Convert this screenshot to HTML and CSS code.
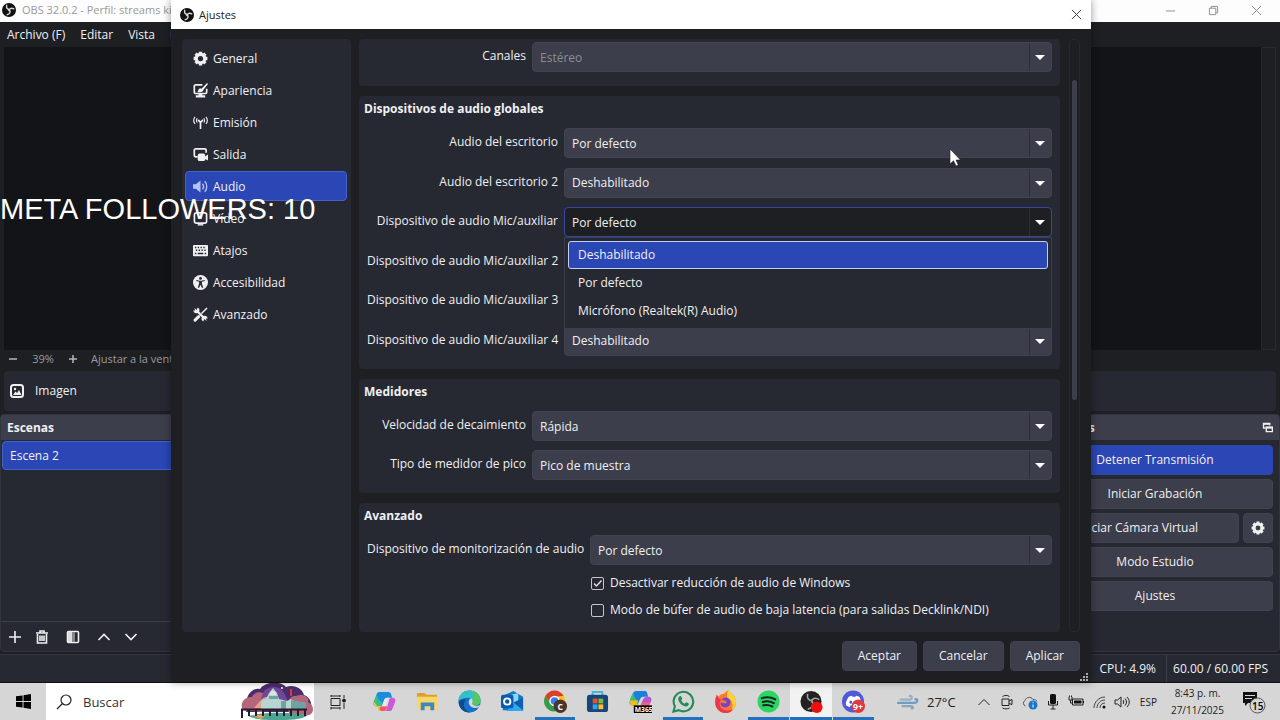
FILE: index.html
```
<!DOCTYPE html>
<html lang="es">

<head>
    <meta charset="UTF-8">
    <meta name="viewport" content="width=device-width, initial-scale=1">
    <title>OBS - Ajustes</title>
    <link rel="stylesheet" href="styles.css">
</head>

<body>
    <!-- shared icons -->
    <svg class="defs" width="0" height="0" aria-hidden="true">
        <symbol id="obs" viewBox="0 0 24 24">
            <circle cx="12" cy="12" r="12" fill="#111"></circle>
            <g fill="none" stroke="#ddd" stroke-width="2.4" stroke-linecap="round">
                <path d="M8 4c-1 4 1 7 5 7"></path>
                <path d="M20 10c-3-2-7-1-8 3"></path>
                <path d="M9 20c4-1 6-4 4-8"></path>
            </g>
            <circle cx="12" cy="12" r="1.6" fill="#ddd"></circle>
        </symbol>
        <symbol id="gear" viewBox="0 0 24 24">
            <g fill="none" stroke="currentColor">
                <circle cx="12" cy="12" r="6.7" stroke-width="5"></circle>
                <path stroke-width="5.4" d="M12 1v4.500M12 18.500V23M1 12h4.500M18.500 12H23M4.200 4.200l3.200 3.200M16.600 16.600l3.200 3.200M4.200 19.800l3.200-3.200M16.600 7.400l3.200-3.200"></path>
            </g>
        </symbol>
    </svg>

    <div class="desktop">
        <div class="obs">
            <div class="titlebar">
                <svg class="logo" viewBox="0 0 24 24"><use href="#obs"></use></svg>
                <span>OBS 32.0.2 - Perfil: streams kick</span>
                <div class="window-buttons">
                    <button aria-label="Minimizar"><svg viewBox="0 0 12 12"><path d="M1 6.5h10"></path></svg></button>
                    <button aria-label="Restaurar"><svg viewBox="0 0 12 12"><path d="M1.500 3.500h7v7h-7zM3.500 3.500v-2h7v7h-2"></path></svg></button>
                    <button aria-label="Cerrar"><svg viewBox="0 0 12 12"><path d="M1 1l10 10M11 1L1 11"></path></svg></button>
                </div>
            </div>
            <nav class="menubar">
                <button>Archivo (F)</button>
                <button>Editar</button>
                <button>Vista</button>
                <button>Perfil</button>
            </nav>
            <div class="preview">
                <div class="canvas"></div>
                <div class="gutter"></div>
            </div>
            <div class="zoombar">
                <button aria-label="Alejar"><svg viewBox="0 0 10 10"><path d="M1 5h8"></path></svg></button>
                <span class="percent">39%</span>
                <button aria-label="Acercar"><svg viewBox="0 0 10 10"><path d="M1 5h8M5 1v8"></path></svg></button>
                <span class="fit">Ajustar a la ventana</span>
            </div>
            <div class="context">
                <svg viewBox="0 0 16 16"><rect x="2" y="2" width="12" height="12" rx="2.5" fill="none" stroke="currentColor" stroke-width="2"></rect><path fill="currentColor" d="M4 12l2.500-3.500 1.500 1.500 2-3L12.500 12z"></path><circle cx="6" cy="6" r="1.2" fill="currentColor"></circle></svg>
                <span>Imagen</span>
            </div>
            <div class="docks">
                <section class="dock scenes">
                    <h2>Escenas</h2>
                    <div class="scene-list">
                        <button class="scene">Escena 2</button>
                    </div>
                    <div class="dock-tools">
                        <button aria-label="Añadir"><svg viewBox="0 0 14 14"><path d="M7 1v12M1 7h12"></path></svg></button>
                        <button aria-label="Eliminar"><svg viewBox="0 0 14 14"><path d="M1 3h12M5 2.500V1h4v1.500M2.500 4v9h9V4M5 5.500v5.500M7 5.500v5.500M9 5.500v5.500"></path></svg></button>
                        <button aria-label="Filtros"><svg viewBox="0 0 14 14"><rect x="1.5" y="1.5" width="11" height="11" rx="1"></rect><path class="solid" d="M2 2h4v10H2z"></path><path class="dim" d="M6 2h3v10H6z"></path></svg></button>
                        <button aria-label="Subir"><svg viewBox="0 0 14 14"><path d="M1.500 10L7 4.500l5.500 5.500"></path></svg></button>
                        <button aria-label="Bajar"><svg viewBox="0 0 14 14"><path d="M1.500 4L7 9.500 12.500 4"></path></svg></button>
                    </div>
                </section>
                <section class="dock controls">
                    <h2>Controles
                        <svg viewBox="0 0 12 12"><path fill="none" stroke="currentColor" stroke-width="1.5" d="M3.500 6.500H1.700V1.700h6.600v2M4.700 6h6.600v4.500H4.700z"></path><path fill="currentColor" d="M1 1h8v2H1zM4 5h8v2H4z"></path></svg>
                    </h2>
                    <div class="control-list">
                        <button class="btn primary">Detener Transmisión</button>
                        <button class="btn">Iniciar Grabación</button>
                        <div class="split">
                            <button class="btn">Iniciar Cámara Virtual</button>
                            <button class="btn square" aria-label="Configurar cámara virtual"><svg viewBox="0 0 24 24"><use href="#gear"></use></svg></button>
                        </div>
                        <button class="btn">Modo Estudio</button>
                        <button class="btn">Ajustes</button>
                    </div>
                </section>
            </div>
            <footer class="statusbar">
                <span>CPU: 4.9%</span>
                <span>60.00 / 60.00 FPS</span>
            </footer>
        </div>

        <div class="dialog" role="dialog" aria-labelledby="dialog-title">
            <header class="dialog-title">
                <svg class="logo" viewBox="0 0 24 24"><use href="#obs"></use></svg>
                <span id="dialog-title">Ajustes</span>
                <button aria-label="Cerrar"><svg viewBox="0 0 12 12"><path d="M1 1l10 10M11 1L1 11"></path></svg></button>
            </header>
            <div class="dialog-body">
                <nav class="sidebar">
                    <button><svg viewBox="0 0 24 24"><use href="#gear"></use></svg>General</button>
                    <button><svg viewBox="0 0 16 16"><path fill="none" stroke="currentColor" stroke-width="1.8" d="M10 1.900H3A1.500 1.500 0 0 0 1.400 3.400v6.200A1.500 1.500 0 0 0 3 11.200h10a1.500 1.500 0 0 0 1.600-1.600V6"></path><path fill="currentColor" d="M15 0l1 1-5 6.500-2-1.500zM4.500 9.500C6 9 5 6.500 7.500 5.500L11 7c.5 2.500-3 3.500-6.500 2.500zM6 11h4v2H6zM3 13h10v2.500H3z"></path></svg>Apariencia</button>
                    <button><svg viewBox="0 0 16 16"><path fill="none" stroke="currentColor" stroke-width="1.2" d="M2.200 9.500a6 6 0 0 1 0-7.500M13.800 9.500a6 6 0 0 0 0-7.500M4.500 8a4 4 0 0 1 0-4.500M11.500 8a4 4 0 0 0 0-4.500"></path><path fill="none" stroke="currentColor" stroke-width="1.8" d="M5.500 5.200L8 8l2.500-2.800M8 7.500V15"></path></svg>Emisión</button>
                    <button><svg viewBox="0 0 16 16"><path fill="none" stroke="currentColor" stroke-width="1.8" d="M5 10.500H3A1.500 1.500 0 0 1 1.400 9V3.400A1.500 1.500 0 0 1 3 1.900h9.500A1.500 1.500 0 0 1 14 3.400V6"></path><rect x="5" y="7" width="8" height="8" rx="2" fill="currentColor"></rect><path fill="currentColor" d="M12.500 10.500L16 8v6.500l-3.500-2z"></path></svg>Salida</button>
                    <button class="active"><svg viewBox="0 0 16 16"><path fill="currentColor" d="M0 5.500h3L8 1.500v13l-5-4H0z"></path><path fill="none" stroke="currentColor" stroke-width="1.5" d="M10 5a4.500 4.500 0 0 1 0 6M12.500 2.500a8 8 0 0 1 0 11"></path></svg>Audio</button>
                    <button><svg viewBox="0 0 16 16"><rect x="1.5" y="2" width="13" height="11" rx="2" fill="none" stroke="currentColor" stroke-width="1.8"></rect><path fill="currentColor" d="M5 14h6v1.500H5z"></path></svg>Vídeo</button>
                    <button><svg viewBox="0 0 16 16"><path fill="currentColor" fill-rule="evenodd" d="M1 2h14a1 1 0 0 1 1 1v10a1 1 0 0 1-1 1H1a1 1 0 0 1-1-1V3a1 1 0 0 1 1-1zM2 4v1.500h1.500V4zM5 4v1.500h1.500V4zM8 4v1.500h1.500V4zM11 4v1.500h1.500V4zM3 7v1.500h1.500V7zM6 7v1.500h1.500V7zM9 7v1.500h1.500V7zM12 7v1.500h1.500V7zM2 10.500V12h1.500v-1.500zM5 10.500V12h6v-1.500zM12.500 10.500V12H14v-1.500z"></path></svg>Atajos</button>
                    <button><svg viewBox="0 0 16 16"><circle cx="8" cy="8" r="8" fill="currentColor"></circle><g fill="#262932"><circle cx="8" cy="3.6" r="1.5"></circle><path d="M3.500 5.200L7 6h2l3.500-.8v1.300l-3 .8v2L11 13.500H9.500L8 10.500l-1.500 3H5l1.500-4.200v-2l-3-.8z"></path></g></svg>Accesibilidad</button>
                    <button><svg viewBox="0 0 16 16"><path fill="none" stroke="currentColor" stroke-width="2.4" d="M4 4l8 8"></path><path fill="currentColor" d="M1.500 1L4 3.200 5 .6C7 1.500 7.500 3.700 6.300 5.300 5 7 2.500 7 1 5.500L.3 3.500l2 .5zM14.500 15L12 12.800 11 15.400C9 14.500 8.500 12.300 9.700 10.700 11 9 13.500 9 15 10.500l.7 2-2-.5z"></path><path fill="none" stroke="currentColor" stroke-width="1.6" d="M15 1L9 7"></path><path fill="none" stroke="currentColor" stroke-width="3.2" stroke-linecap="round" d="M6 10.300L2.200 14"></path></svg>Avanzado</button>
                </nav>
                <div class="groups">
                    <section class="group general">
                        <div class="form narrow">
                            <label for="channels">Canales</label>
                            <select id="channels" disabled><option>Estéreo</option></select>
                        </div>
                    </section>
                    <section class="group devices">
                        <h3>Dispositivos de audio globales</h3>
                        <div class="form medium">
                            <label for="desktop1">Audio del escritorio</label>
                            <select id="desktop1"><option>Por defecto</option></select>
                            <label for="desktop2">Audio del escritorio 2</label>
                            <select id="desktop2"><option>Deshabilitado</option></select>
                            <label for="mic1">Dispositivo de audio Mic/auxiliar</label>
                            <div class="combo">
                                <select id="mic1" class="open"><option>Por defecto</option></select>
                                <ul class="popup" role="listbox">
                                    <li class="selected" role="option" aria-selected="true">Deshabilitado</li>
                                    <li role="option">Por defecto</li>
                                    <li role="option">Micrófono (Realtek(R) Audio)</li>
                                </ul>
                            </div>
                            <label for="mic2">Dispositivo de audio Mic/auxiliar 2</label>
                            <select id="mic2"></select>
                            <label for="mic3">Dispositivo de audio Mic/auxiliar 3</label>
                            <select id="mic3"></select>
                            <label for="mic4">Dispositivo de audio Mic/auxiliar 4</label>
                            <select id="mic4"><option>Deshabilitado</option></select>
                        </div>
                    </section>
                    <section class="group">
                        <h3>Medidores</h3>
                        <div class="form narrow">
                            <label for="decay">Velocidad de decaimiento</label>
                            <select id="decay"><option>Rápida</option></select>
                            <label for="peak">Tipo de medidor de pico</label>
                            <select id="peak"><option>Pico de muestra</option></select>
                        </div>
                    </section>
                    <section class="group">
                        <h3>Avanzado</h3>
                        <div class="form wide">
                            <label for="monitor">Dispositivo de monitorización de audio</label>
                            <select id="monitor"><option>Por defecto</option></select>
                            <label class="check"><input type="checkbox" checked>Desactivar reducción de audio de Windows</label>
                            <label class="check"><input type="checkbox">Modo de búfer de audio de baja latencia (para salidas Decklink/NDI)</label>
                        </div>
                    </section>
                </div>
                <div class="scrollbar"><div class="thumb"></div></div>
            </div>
            <footer class="dialog-footer">
                <button class="btn">Aceptar</button>
                <button class="btn">Cancelar</button>
                <button class="btn">Aplicar</button>
            </footer>
            <svg class="grip" viewBox="0 0 9 9"><path d="M7 1h2v2H7zM7 4h2v2H7zM7 7h2v2H7zM4 4h2v2H4zM4 7h2v2H4zM1 7h2v2H1z"></path></svg>
        </div>

        <div class="goal">META FOLLOWERS: 10</div>
        <svg class="cursor" viewBox="0 0 12 19"><path d="M1 1v15l3.500-3.300L7 18l2.300-1-2.300-5H11.500z"></path></svg>
    </div>

    <div class="taskbar">
        <button class="start" aria-label="Inicio"><svg viewBox="0 0 16 16"><path d="M0 2.500l7-1v6H0zM8 1.300L16 0v7.500H8zM0 8.500h7v6l-7-1zM8 8.500h8V16l-8-1.300z"></path></svg></button>
        <label class="search">
            <svg viewBox="0 0 16 16"><circle cx="10" cy="6" r="5"></circle><path d="M6.500 9.500L1 15"></path></svg>
            <input type="text" placeholder="Buscar" aria-label="Buscar">
            <svg class="doodle" viewBox="0 0 74 37">
                <path fill="#4b2d6b" d="M8 22C4 14 12 4 20 6 24-1 40-3 46 4c8-3 16 1 18 8 8 3 9 12 5 17H6z"></path>
                <path fill="#b5667b" d="M3 27c-4-7 2-14 9-13 3-6 11-6 14-1l-4 16zM48 27c-2-8 2-15 8-14 8-3 14 2 12 6 7 3 6 12 1 13H50z"></path>
                <path fill="#6f4796" d="M24 8c6-6 16-5 20 2l4 8H20z"></path>
                <path fill="#e3a48d" d="M20 18c4-5 9-5 12-1l6 8H14z"></path>
                <path fill="#b9d5d2" d="M21 26v-8l5-2 3-6 4-5 4 5 2 6 8 2 4-2 3 2 12 2v7z"></path>
                <path fill="#6fa3a3" d="M29 13h9v3h-9zM41 18h5v8h-5zM51 17l15 3v6H51z"></path>
                <path fill="#dbe8df" d="M30 12a3 4 0 0 1 6 0z"></path>
                <path fill="#4aa593" d="M8 33c18-4 40-4 60-1-6 5-20 5-32 5-14 0-22-1-28-4z"></path>
                <path fill="#e9a052" d="M12 32h14l-5 4z"></path>
                <path fill="none" stroke="#251b2b" stroke-width="2" d="M1 26.500h66M2 26v9M9 26v7M16 26v7M23 26v7M30 26v7M37 26v7M44 26v7M51 26v7M58 26v7M65 26v7"></path>
                <path fill="#e0383f" d="M50 6h2v7h-2z"></path>
                <circle cx="42" cy="5" r="1" fill="#fff"></circle>
            </svg>
        </label>
        <button class="taskview" aria-label="Vista de tareas"><svg viewBox="0 0 16 16"><path d="M1 4.500h9v7H1zM1 1v2M10 1v2M1 13v2.500M10 13v2.500M1 2h9M1 14h9M14 1v3M14 9v6"></path><circle cx="14" cy="6.5" r="1.5" fill="#111"></circle></svg></button>
        <div class="apps">
            <button aria-label="Copilot"><svg viewBox="0 0 24 24">
                <path fill="#1b8de0" d="M7 2h9c2 0 2.500 1 3 3l1 3h-5c-2 0-3 1-3.600 3L9 17H4c-3 0-4-2-3-5L4 4c.6-1.500 1.500-2 3-2z"></path>
                <path fill="#35bd8b" d="M4 5L1 12c-1 3 0 5 3 5h5l1-4c-3-1-5-4-6-8z"></path>
                <path fill="#f0c52e" d="M1 12c-1 3 0 5 3 5h4c1 0 1 3 2 5H8c-2 0-2.500-1-3-3l-.5-2z"></path>
                <path fill="#cc59d8" d="M20 8c3 0 4 2 3 5l-3 7c-.6 1.500-1.500 2-3 2h-6c2 0 3-1 3.600-3L17 10c.5-1.500 1.500-2 3-2z"></path>
                <path fill="#f5566c" d="M9 17h6l-1 2.500c-.5 1.700-1.500 2.500-4 2.500-1.500 0-3-1-3.500-3z"></path>
                <path fill="#e8e8ea" d="M11.500 11c.6-2 1.500-3 3.500-3h3c-2 0-2 1-2.500 2.500L13.500 17H9.500z"></path>
            </svg></button>
            <button aria-label="Explorador"><svg viewBox="0 0 24 24">
                <path fill="#dca02d" d="M1 3h8l2 2h11v4H1z"></path><path fill="#f9d767" d="M1 7h22v13H1z"></path><path fill="#3f86c7" d="M5 21v-8h14v8h-4v-4H9v4z"></path>
            </svg></button>
            <button aria-label="Edge"><svg viewBox="0 0 24 24">
                <circle cx="12" cy="12" r="11.500" fill="#1670c5"></circle>
                <path fill="#31c1c9" d="M.5 11C1 4 7 .5 12 .5c7 0 11.500 5 11.500 10 0 4-3 6-6 6-2 0-4-1-3-2.500 1-2 .5-6-4-6-4 0-8 2-10 3z"></path>
                <path fill="#59c85c" d="M14 .7c6 1 9.500 5 9.500 9.800 0 4-3 6-6 6-2 0-4-1-3-2.500C18 11 18 5 14 .7z"></path>
                <path fill="#0d4c91" d="M8 10c-4 6-1 12 5 13.400C6 24 1 19 .8 13 2 10 5 9 8 10z"></path>
                <path fill="#d6d6d6" d="M14.500 14c1.500-1.500 1-4-.5-5.500-2 .5-3.500 3-2.500 6 1.500 4 6 5 10.500 3.500l1-2.500c-3 2-6.500 2-8.500-1.500z"></path>
            </svg></button>
            <button aria-label="Outlook"><svg viewBox="0 0 24 24">
                <path fill="#1677c9" d="M2 6l11-5 10 6v14H2z"></path><path fill="#8bd7f8" d="M6 6l12-3v9l-8 4z"></path><path fill="#2ea9ed" d="M23 8v14H5l8-7z"></path><path fill="#0c5fb0" d="M23 8v13L13 13z"></path><rect y="5" width="13" height="14" rx="2" fill="#0a5aae"></rect><circle cx="6.5" cy="12" r="3.3" fill="none" stroke="#fff" stroke-width="2"></circle>
            </svg></button>
            <button class="running" aria-label="Chrome"><svg viewBox="0 0 24 24">
                <circle cx="11" cy="11.5" r="11" fill="#fbc21a"></circle><path fill="#df3b30" d="M1.500 6a11 11 0 0 1 19 0l-9.500 1-4.500 7z"></path><path fill="#2d9e4b" d="M1.500 6A11 11 0 0 0 11 22.500l5-8H7z"></path><circle cx="11" cy="11.5" r="5.5" fill="#fff"></circle><circle cx="11" cy="11.5" r="4" fill="#3a7ce8"></circle><circle cx="17" cy="17" r="7" fill="#4d352c"></circle><text x="14" y="20.5" class="avatar">C</text>
            </svg></button>
            <button aria-label="Store"><svg viewBox="0 0 24 24">
                <path fill="none" stroke="#45b5dd" stroke-width="2" d="M7 6V2h10v4"></path><rect x="1" y="5" width="22" height="18" rx="3" fill="#18467a"></rect><path fill="#ef5127" d="M7 9h5v5H7z"></path><path fill="#80bb31" d="M13 9h5v5h-5z"></path><path fill="#2aa8e8" d="M7 15h5v5H7z"></path><path fill="#fdbd2c" d="M13 15h5v5h-5z"></path>
            </svg></button>
            <button aria-label="Microsoft 365"><svg viewBox="0 0 24 24">
                <path fill="#1b7fdc" d="M8 1h8c3 0 3 2 4 6h-5c-2 0-3 1-4 4l-2 4H2c-2-1-1-4 1-9 1-3 2-5 5-5z"></path><path fill="#3ebd75" d="M5 3C2 6 0 11 1 15h8l1-4C7 10 5 7 5 3z"></path><path fill="#f2ba25" d="M1 11h8l-1 6H2z"></path><path fill="#be54ce" d="M20 7c3 0 4 2 3 5l-2 4h-9l3-7c1-1 2-2 5-2z"></path><path fill="#f16478" d="M14 13h8l-1 4h-8z"></path><path d="M5 16h19v8H5z"></path><text x="6" y="23" class="tag">M365</text>
            </svg></button>
            <button class="running" aria-label="WhatsApp"><svg viewBox="0 0 24 24">
                <path fill="none" stroke="#248a57" stroke-width="2.2" d="M1.500 22.500L3 17a10.200 10.200 0 1 1 4 4z"></path><path fill="#248a57" d="M8 6.500c1-.5 1.700 0 2 1l.7 1.700L9.600 11c.8 1.700 2 2.700 3.700 3.400l1.500-1.500 2.700 1.300c.4 2-1.500 3.300-3.300 3-4.200-.8-7-4-7.700-7.200C6.300 8.500 7 7.200 8 6.500z"></path>
            </svg></button>
            <button aria-label="Firefox"><svg viewBox="0 0 24 24">
                <path fill="#ff7a2b" d="M3 5l2 2c1-2 3-3 5-3l5-4c1 3 7 4 8 12 0 7-5 12-11 12S1 19 1 13c0-3 1-6 2-8z"></path><path fill="#ffd23b" d="M15 0c1 3 7 4 8 12 0 4-2 8-5 10 3-7 1-11-4-14-1-3 0-6 1-8z"></path><path fill="#ed3553" d="M1.500 11c-1 7 4 13 10.500 13 3 0 6-1 8-4-6 3-13 1-14-5-.5-2 .5-4 2-4.500C5 9 4 8 3 5c-1 2-1.500 4-1.500 6z"></path><path fill="#7444cc" d="M8 10c2-3 7-3 9 1 1 4-2 8-6 7-3 0-5-3-4-5l5 1c2-1 1-3-1-3z"></path>
            </svg></button>
            <button class="running" aria-label="Spotify"><svg viewBox="0 0 24 24">
                <circle cx="12" cy="12" r="11.500" fill="#2bd667"></circle><path fill="none" stroke="#16291c" stroke-linecap="round" stroke-width="2.2" d="M5 8.500c5-1.500 10-1 14 1.300M6 12.500c4-1.200 8-.8 11.500 1.200M6.500 16c3.500-.8 6.500-.5 9.500 1.200"></path>
            </svg></button>
            <button class="running current" aria-label="OBS"><svg viewBox="0 0 24 24">
                <circle cx="11.500" cy="12" r="11" fill="#222"></circle><path fill="none" stroke="#a5a5a5" stroke-width="1.6" d="M8 4c-1 5 1 7 5 7M20 10c-4-3-8-1-8 3M8 20c5-1 6-4 5-8"></path><circle cx="17.500" cy="18" r="6" fill="#f20d0d"></circle>
            </svg></button>
            <button class="running" aria-label="Discord"><svg viewBox="0 0 24 24">
                <circle cx="11.5" cy="12" r="11.5" fill="#5059da"></circle><path fill="#fff" fill-rule="evenodd" d="M7 7l3-1 1 1h3l1-1 3 1c2 3 2.500 6 2 9l-4 2-1-2H9l-1 2-4-2c-.5-3 1-6 3-9zm2.200 4a1.500 1.700 0 1 0 0 3.400 1.500 1.700 0 0 0 0-3.400zm6 0a1.500 1.700 0 1 0 0 3.400 1.500 1.700 0 0 0 0-3.400z"></path><circle cx="17" cy="17" r="7" fill="#dc3a45"></circle><text x="11.500" y="20.5" class="unread">9+</text>
            </svg></button>
        </div>
        <div class="weather">
            <svg viewBox="0 0 24 16"><g fill="none" stroke-linecap="round" stroke-width="2.4"><path stroke="#9ab0c2" d="M4 5.500h9c4 0 4-5 1-4"></path><path stroke="#6f9cc4" d="M1 9h18c4 0 4-5 1-4"></path><path stroke="#8aa5bc" d="M6 12.500h9c3 0 3 3 1 2.500"></path></g></svg>
            27°C
        </div>
        <div class="tray">
            <svg viewBox="0 0 16 16"><path d="M2.500 11L8 5.500l5.500 5.500"></path></svg>
            <svg viewBox="0 0 16 16"><path d="M3 5h7v6.500H3zM10 7l3-1.500v5L10 9.500M3.500 2.500C6 1 8 1 10.500 2.500M3.500 14c2.500 1.200 4.500 1.200 7 0"></path></svg>
            <svg viewBox="0 0 16 16"><path stroke="#555" d="M3.500 12A3 3 0 0 1 3 6.500C4 3 9 2 11 5.500c2-.3 3.500.5 4 2"></path><circle cx="11" cy="11" r="4.500" fill="#1976c8" stroke="none"></circle><path stroke="#fff" d="M11 10.500v3M11 8.200v1"></path></svg>
            <svg viewBox="0 0 16 16"><rect x="5" y="0" width="6" height="10" rx="1.500" fill="#111" stroke="none"></rect><path d="M3.500 7v4h9V7M8 11v4M5.500 15h5"></path></svg>
            <svg viewBox="0 0 16 16"><path d="M4.500 5H15v6H4.500zM1 3v3h3V3M2.500 6v3H5M1.500 1.500V3M3.500 1.500V3"></path><path fill="#111" stroke="none" d="M6 6.500h7.500v3H6zM15 7h1v2h-1z"></path></svg>
            <svg viewBox="0 0 16 16"><path stroke="#444" d="M3 14C3 8 8 3 14 3M6 14c0-4.500 3.500-8 8-8M9 14c0-3 2-5 5-5"></path><circle cx="13" cy="13" r="1.500" fill="#111" stroke="none"></circle></svg>
            <svg viewBox="0 0 16 16"><path d="M1 6h2.500L7 3v10L3.500 10H1zM9 6c1 1 1 3 0 4M11 4.500c2 2 2 5 0 7M13 3c3 3 3 7 0 10"></path></svg>
            <span class="lang">ESP</span>
        </div>
        <div class="clock"><span>8:43 p. m.</span><span>27/11/2025</span></div>
        <button class="notices" aria-label="Notificaciones"><svg viewBox="0 0 24 24"><path fill="#111" d="M1 2h14v11H6l-3 3v-3H1z"></path><path stroke="#d6d6d6" d="M3 5.500h10M3 8.500h7"></path><circle cx="15.500" cy="15.500" r="7.500" fill="#d6d6d6" stroke="#555"></circle><text x="10" y="19.500">15</text></svg></button>
    </div>
</body>

</html>
```

FILE: styles.css
```
* {
    box-sizing: border-box;
}

html,
body {
    margin: 0;
    height: 100%;
}

body {
    display: flex;
    flex-direction: column;
    overflow: hidden;
    font-family: "Open Sans", "Noto Sans", sans-serif;
    font-size: 12px;
    line-height: 18px;
    color: #f0f0f2;
    background: #1d1f23;
}

button,
select,
input {
    font: inherit;
    color: inherit;
    margin: 0;
    padding: 0;
    border: 0;
    background: none;
}

svg {
    display: block;
    flex-shrink: 0;
}

h2,
h3,
ul {
    margin: 0;
    padding: 0;
    font-size: 12px;
}

.defs {
    position: absolute;
}

.desktop {
    position: relative;
    flex: 1;
    min-height: 0;
}

.logo {
    width: 14px;
    height: 14px;
}

/* main window */

.obs {
    height: 100%;
    display: flex;
    flex-direction: column;
    background: #1d1f23;
}

.titlebar {
    display: flex;
    align-items: center;
    gap: 6px;
    height: 22px;
    padding: 0 18px 2px 2px;
    background: #fdfdfd;
    color: #999;
    font-size: 11px;
}

.window-buttons {
    display: flex;
    gap: 32px;
    margin-left: auto;
}

.window-buttons svg,
.dialog-title button svg {
    width: 11px;
    height: 11px;
    fill: none;
    stroke: #888;
}

.menubar {
    display: flex;
    gap: 15px;
    height: 25px;
    padding-left: 7px;
}

.preview {
    flex: 1;
    display: flex;
    padding: 0 4px;
}

.canvas {
    flex: 1;
    background: #121417;
}

.gutter {
    width: 15px;
    border: 1px solid #282a2f;
}

.zoombar {
    display: flex;
    align-items: center;
    height: 18px;
    margin-bottom: 3px;
    padding-left: 8px;
    color: #9a9ba0;
    font-size: 11px;
}

.zoombar svg {
    width: 10px;
    height: 10px;
    fill: none;
    stroke: #b5b6ba;
    stroke-width: 1.5;
}

.percent {
    width: 50px;
    text-align: center;
}

.fit {
    margin-left: 13px;
}

.context {
    display: flex;
    align-items: center;
    gap: 10px;
    height: 40px;
    margin: 0 4px 3px;
    padding-left: 5px;
    border-radius: 4px;
    background: #262932;
}

.context svg {
    width: 16px;
    height: 16px;
}

.docks {
    display: flex;
    justify-content: space-between;
    height: 238px;
}

.dock {
    display: flex;
    flex-direction: column;
    width: 250px;
    border: 1px solid #32343e;
    border-radius: 4px;
    background: #262932;
}

.dock h2 {
    display: flex;
    align-items: center;
    justify-content: space-between;
    height: 25px;
    padding: 0 6px;
    background: #3c3e4b;
}

.dock h2 svg {
    width: 11px;
    height: 11px;
}

.scene-list {
    flex: 1;
    padding: 1px;
}

.scene {
    display: block;
    width: 100%;
    height: 29px;
    padding-left: 7px;
    text-align: left;
    border: 1px solid #4562cc;
    border-radius: 4px;
    background: #2b46b5;
}

.dock-tools {
    display: flex;
    align-items: center;
    gap: 13px;
    height: 30px;
    padding-left: 7px;
    border-top: 1px solid #3c3e4b;
}

.dock-tools svg {
    width: 14px;
    height: 14px;
    fill: none;
    stroke: #f0f0f2;
    stroke-width: 1.6;
}

.dock-tools button:nth-child(3) {
    padding: 0 4px;
}

.dock-tools .solid {
    fill: #ddd;
    stroke: none;
}

.dock-tools .dim {
    fill: #888;
    stroke: none;
}

.control-list {
    display: flex;
    flex-direction: column;
    gap: 4px;
    padding: 5px 6px;
}

.btn {
    height: 30px;
    padding: 0 15px;
    border: 1px solid #41434f;
    border-radius: 4px;
    background: #3c3e4b;
}

.primary {
    border-color: #2b46b5;
    background: #2b46b5;
}

.split {
    display: flex;
    gap: 4px;
}

.split .btn {
    flex: 1;
}

.split .square {
    flex: none;
    width: 30px;
    padding: 0 7px;
}

.square svg {
    width: 14px;
    height: 14px;
}

.statusbar {
    display: flex;
    justify-content: flex-end;
    height: 28px;
    margin-top: 2px;
    line-height: 27px;
    border-top: 1px solid #32343e;
    background: #262932;
}

.statusbar span {
    padding: 0 12px 0 6px;
}

.statusbar span:first-child {
    padding-right: 10px;
}

.statusbar span + span {
    border-left: 1px solid #3c3e4b;
}

/* settings dialog */

.dialog {
    position: absolute;
    top: 0;
    bottom: 0;
    left: 171px;
    right: 189px;
    display: flex;
    flex-direction: column;
    background: #1d1f23;
    box-shadow: 0 0 8px rgba(0, 0, 0, .4);
}

.dialog-title {
    display: flex;
    align-items: center;
    gap: 5px;
    height: 29px;
    padding: 0 9px;
    background: #fff;
    color: #222;
    font-size: 11px;
}

.dialog-title button {
    margin-left: auto;
}

.dialog-title button svg {
    stroke: #333;
}

.dialog-body {
    flex: 1;
    display: flex;
    min-height: 0;
    padding: 10px 11px 0;
}

.sidebar {
    display: flex;
    flex-direction: column;
    gap: 2px;
    width: 169px;
    margin-right: 8px;
    padding: 4px 4px 4px 3px;
    border-radius: 4px;
    background: #262932;
}

.sidebar button {
    display: flex;
    align-items: center;
    gap: 5px;
    height: 30px;
    padding: 1px 7px 0;
    border: 1px solid transparent;
    border-radius: 4px;
}

.sidebar svg {
    width: 15px;
    height: 15px;
}

.sidebar .active {
    border-color: #4562cc;
    background: #2b46b5;
}

.active svg {
    color: #b5c3fa;
}

.groups {
    flex: 1;
    display: flex;
    flex-direction: column;
    gap: 10px;
}

.group {
    padding-bottom: 13px;
    border-radius: 4px;
    background: #262932;
}

.general {
    padding: 3px 0 14px;
}

.devices {
    flex: 1;
    display: flex;
    flex-direction: column;
}

.devices .form {
    flex: 1;
    align-content: space-between;
    row-gap: 0;
}

.group h3 {
    margin-bottom: 7px;
    padding-left: 5px;
    line-height: 25px;
}

.form {
    display: grid;
    gap: 9px 6px;
    padding: 0 8px;
}

.narrow {
    grid-template-columns: 159px 1fr;
}

.medium {
    grid-template-columns: 191px 1fr;
}

.wide {
    grid-template-columns: 217px 1fr;
}

.form label {
    align-self: center;
    padding-bottom: 2px;
    text-align: right;
    white-space: nowrap;
}

select {
    appearance: none;
    width: 100%;
    height: 30px;
    padding: 1px 7px 0;
    border: 1px solid #41434f;
    border-radius: 4px;
    background-color: #3c3e4b;
    background-image: url("data:image/svg+xml,%3Csvg xmlns='http://www.w3.org/2000/svg' width='22' height='30'%3E%3Cpath d='M.5 0v30' stroke='%232b2d37'/%3E%3Cpath d='M6 13h10l-5 5z' fill='%23fff'/%3E%3C/svg%3E");
    background-position: right center;
    background-repeat: no-repeat;
}

select:disabled {
    color: #8b8c95;
    opacity: 1;
}

select.open {
    border-color: #3447a5;
    background-color: #1d1f23;
}

.combo {
    position: relative;
}

.popup {
    position: absolute;
    z-index: 1;
    top: 100%;
    left: 0;
    right: 0;
    padding: 3px;
    list-style: none;
    border: 1px solid #3c3e4b;
    background: #262932;
}

.popup li {
    height: 28px;
    padding: 0 9px;
    line-height: 26px;
    border: 1px solid transparent;
}

.popup .selected {
    border-color: #c5cff5;
    border-radius: 3px;
    background: #2b46b5;
}

.form .check {
    grid-column: 2;
    display: flex;
    align-items: center;
    gap: 6px;
    padding: 0 0 0 1px;
}

.check input {
    appearance: none;
    width: 13px;
    height: 13px;
    border: 1px solid #c5c6cc;
    border-radius: 2px;
}

.check input:checked {
    background: url("data:image/svg+xml,%3Csvg xmlns='http://www.w3.org/2000/svg' viewBox='0 0 11 11'%3E%3Cpath d='M2 5.5l2.500 2.500L9.500 2.500' fill='none' stroke='%23ddd' stroke-width='1.500'/%3E%3C/svg%3E");
}

.scrollbar {
    width: 11px;
    margin-left: 9px;
    padding: 40px 2px 0;
    border: 1px solid #26282d;
    border-radius: 4px;
}

.thumb {
    height: 58%;
    border-radius: 3px;
    background: #3c3e4b;
}

.dialog-footer {
    display: flex;
    align-items: center;
    justify-content: flex-end;
    gap: 6px;
    height: 50px;
    padding: 0 11px 3px;
}

.grip {
    position: absolute;
    right: 3px;
    bottom: 1px;
    width: 9px;
    height: 9px;
    fill: #aaa;
}

.goal {
    position: absolute;
    top: 192px;
    left: 0;
    font: 29px/34px "Liberation Sans", Arial, sans-serif;
    color: #fff;
    white-space: nowrap;
}

.cursor {
    position: absolute;
    top: 148px;
    left: 949px;
    width: 12px;
    height: 19px;
    fill: #fff;
    stroke: #222;
    stroke-width: .6;
}

/* windows taskbar */

.taskbar {
    display: flex;
    align-items: stretch;
    height: 38px;
    border-top: 1px solid #111;
    background: #d6d6d6;
    color: #222;
}

.taskbar button {
    display: flex;
    align-items: center;
    justify-content: center;
}

.start {
    width: 46px;
}

.start svg {
    width: 15px;
    height: 15px;
}

.search {
    display: flex;
    align-items: center;
    width: 268px;
    padding-left: 10px;
    background: #fff;
    font-size: 13px;
}

.search svg {
    width: 16px;
    height: 16px;
    fill: none;
    stroke: #222;
    stroke-width: 1.2;
}

.search input {
    flex: 1;
    min-width: 0;
    padding-left: 11px;
    outline: 0;
}

.search input::placeholder {
    color: #333;
    opacity: 1;
}

.search .doodle {
    width: 74px;
    height: 37px;
    stroke: none;
}

.taskview {
    width: 48px;
}

.taskview svg {
    width: 16px;
    height: 16px;
    fill: none;
    stroke: #222;
}

.apps {
    display: flex;
    width: 40%;
    margin-left: 1px;
}

.apps button {
    flex: 1;
    border-bottom: 3px solid transparent;
    background-clip: padding-box;
}

.apps svg {
    width: 23px;
    height: 23px;
    margin-top: 3px;
}

.apps .running {
    border-image: linear-gradient(90deg, transparent 10%, #2470bd 10%, #2470bd 90%, transparent 90%) 3;
}

.apps .current {
    border-image: none;
    border-color: #2470bd;
    background: #f2f2f2;
}

.avatar,
.unread,
.tag {
    font-weight: bold;
    fill: #fff;
}

.avatar,
.unread {
    font-size: 9px;
}

.tag {
    font-size: 7px;
}

.weather {
    display: flex;
    align-items: center;
    gap: 8px;
    margin-left: 22px;
    font-size: 13px;
}

.weather svg {
    width: 22px;
    height: 16px;
}

.tray {
    display: flex;
    align-items: center;
    gap: 7px;
    margin-left: auto;
}

.tray svg {
    width: 16px;
    height: 16px;
    fill: none;
    stroke: #222;
}

.lang {
    margin-left: 3px;
    font-size: 10px;
}

.clock {
    display: flex;
    flex-direction: column;
    justify-content: center;
    margin: 0 18px 0 14px;
    text-align: center;
    font-size: 10px;
    line-height: 17px;
}

.notices {
    width: 24px;
    margin-right: 14px;
}

.notices svg {
    width: 24px;
    height: 24px;
}

.notices text {
    font-size: 10px;
    font-weight: 600;
}
```
